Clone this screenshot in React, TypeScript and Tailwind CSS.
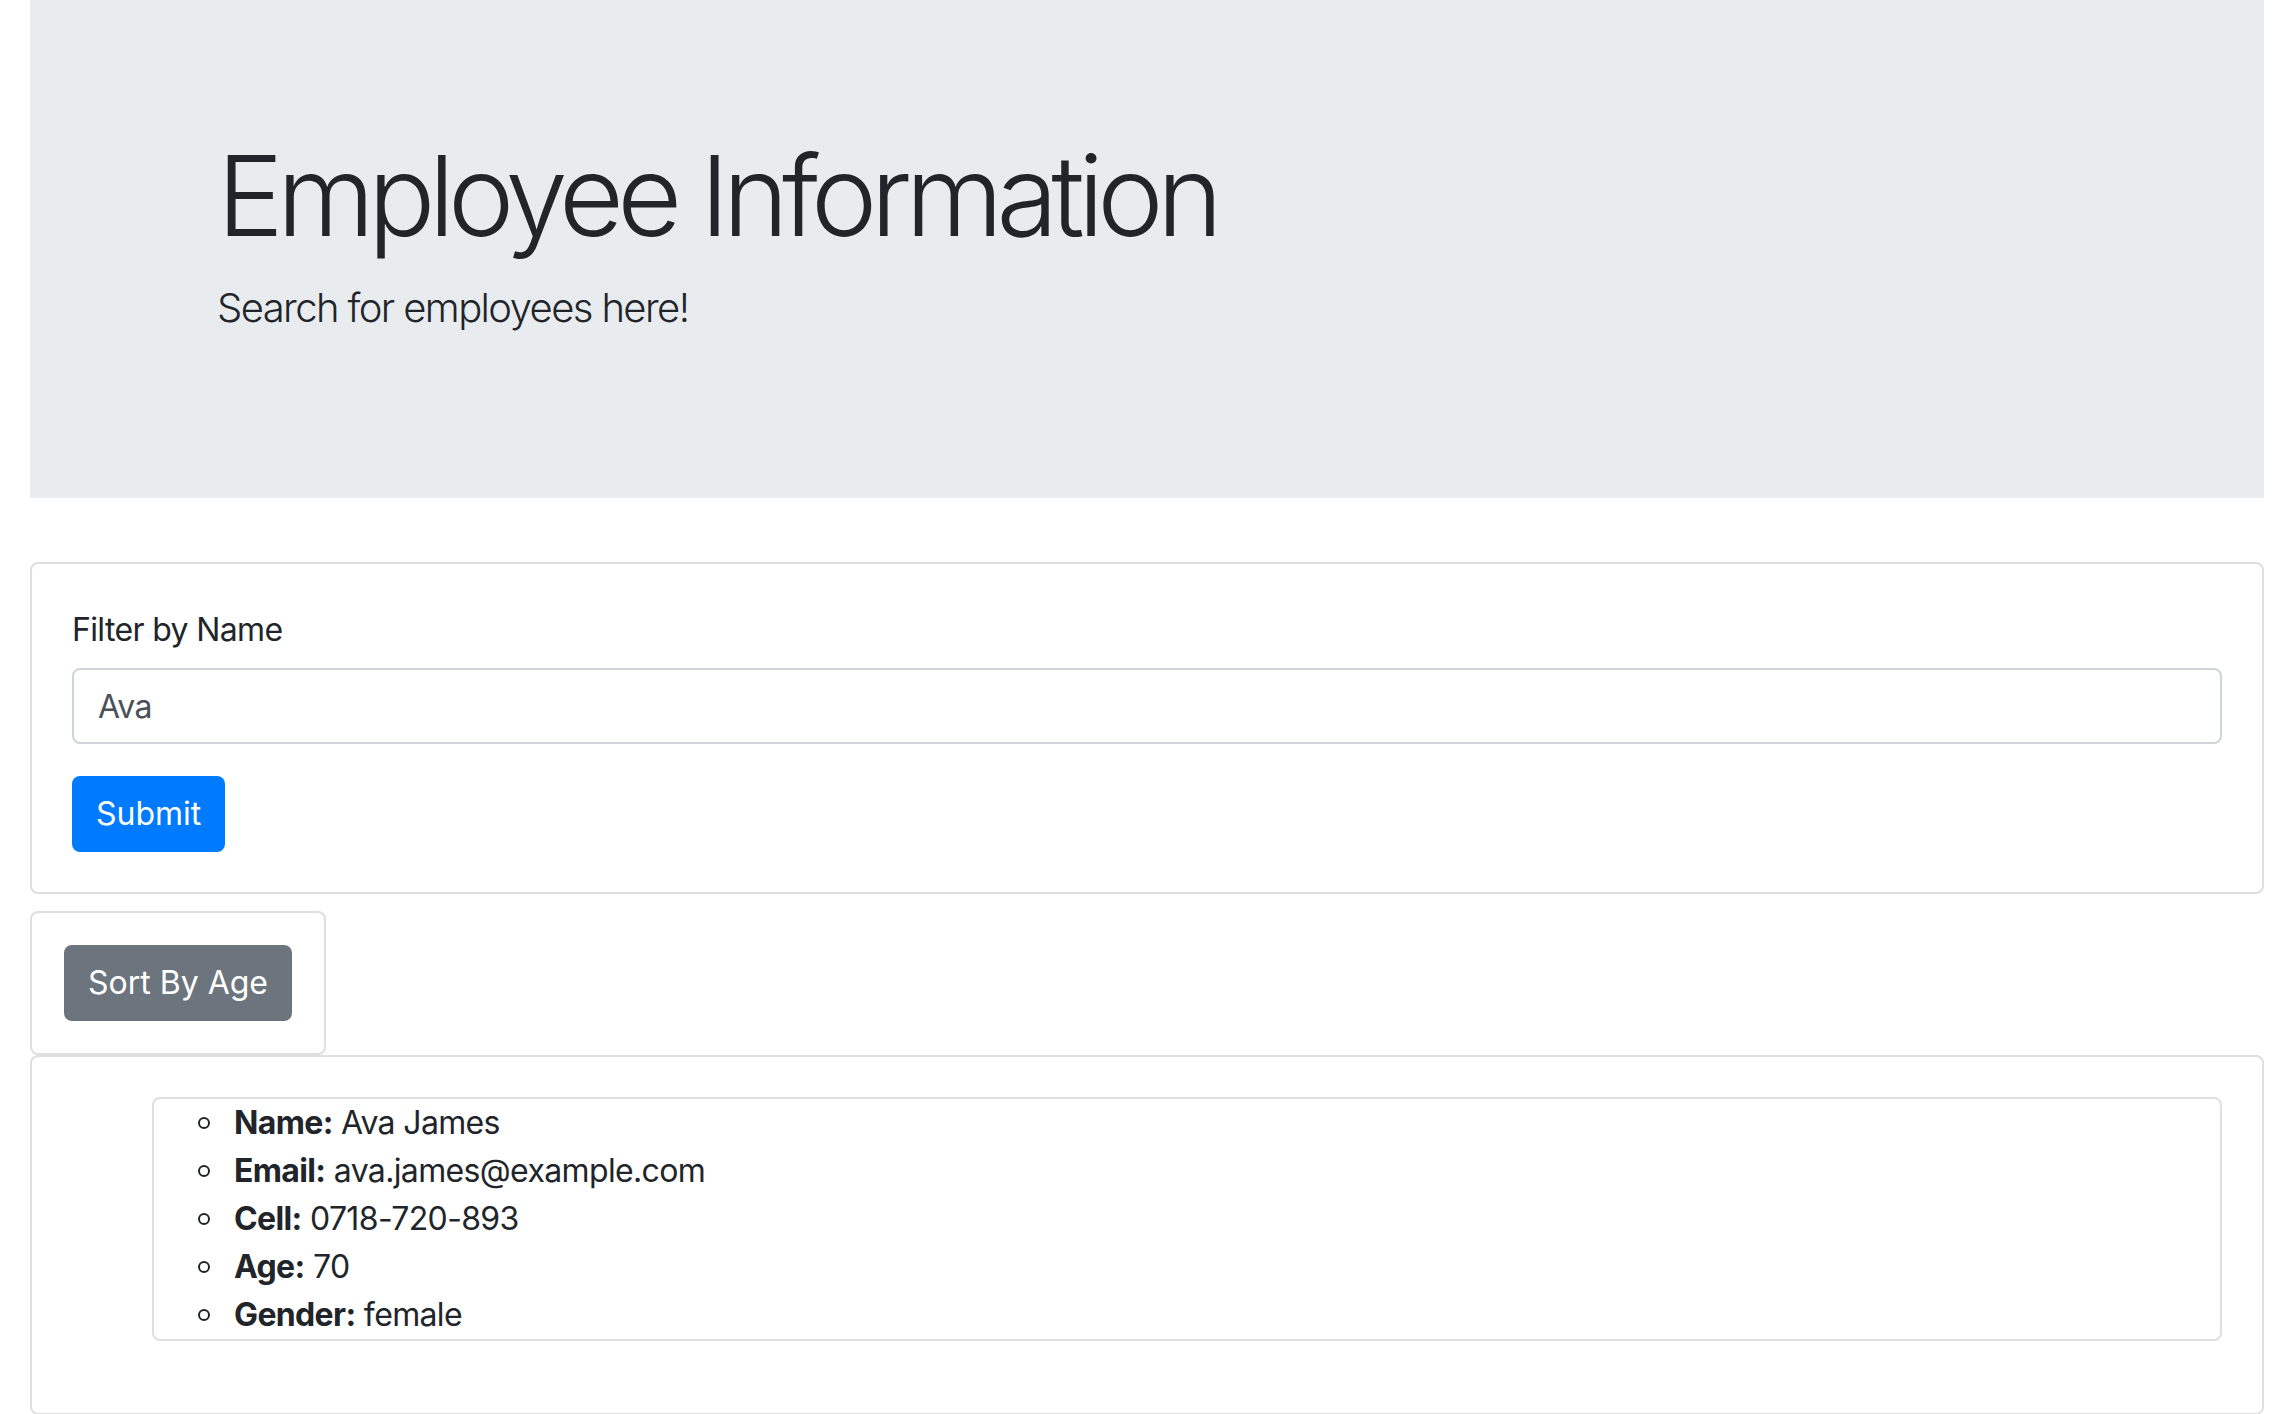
import { useState } from "react";

const EMPLOYEE = {
  name: "Ava James",
  email: "ava.james@example.com",
  cell: "0718-720-893",
  age: 70,
  gender: "female",
};

export default function App() {
  const [query, setQuery] = useState("Ava");

  const fields = [
    { label: "Name:", value: EMPLOYEE.name },
    { label: "Email:", value: EMPLOYEE.email },
    { label: "Cell:", value: EMPLOYEE.cell },
    { label: "Age:", value: String(EMPLOYEE.age) },
    { label: "Gender:", value: EMPLOYEE.gender },
  ];

  return (
    <div className="min-h-screen bg-white px-[30px] font-['Inter','Noto_Sans',sans-serif] text-[32px] leading-[48px] tracking-[-0.02em] text-[#212529]">
      <div className="mb-[64px] bg-[#e9ecef] py-[128px]">
        <div className="mx-auto w-[1920px] px-[30px]">
          <h1 className="mb-[16px] text-[112px] font-light leading-[1.2] tracking-[-0.06em]">
            Employee Information
          </h1>
          <p className="mb-[32px] text-[40px] font-light leading-[60px] tracking-[-0.04em]">
            Search for employees here!
          </p>
        </div>
      </div>

      <div className="rounded-[8px] border-2 border-[#dfdfdf] p-[40px]">
        <label className="mb-[16px] block pt-[2px]">Filter by Name</label>
        <input
          value={query}
          onChange={(e) => setQuery(e.target.value)}
          className="-mt-[2px] block h-[76px] w-full rounded-[8px] border-2 border-[#ced4da] px-[24px] text-[32px] text-[#495057] outline-none"
        />
        <button className="mt-[32px] h-[76px] rounded-[8px] bg-[#007bff] px-[24px] tracking-normal text-white">
          Submit
        </button>
      </div>

      <div className="mt-[17px] w-fit rounded-[8px] border-2 border-[#dfdfdf] p-[32px]">
        <button className="h-[76px] rounded-[8px] bg-[#6c757d] px-[24px] tracking-normal text-white">
          Sort By Age
        </button>
      </div>

      <div className="rounded-[8px] border-2 border-[#dfdfdf] px-[40px] pt-[40px] pb-[72px]">
        <div className="pl-[80px]">
          <ul className="rounded-[8px] border-2 border-[#dfdfdf] pl-[80px]">
            {fields.map((f) => (
              <li key={f.label} className="flex items-center">
                <span className="-ml-[36px] mr-[24px] h-[12px] w-[12px] rounded-full border-2 border-[#212529]" />
                <span>
                  <strong className="font-bold">{f.label}</strong> {f.value}
                </span>
              </li>
            ))}
          </ul>
        </div>
      </div>
    </div>
  );
}
